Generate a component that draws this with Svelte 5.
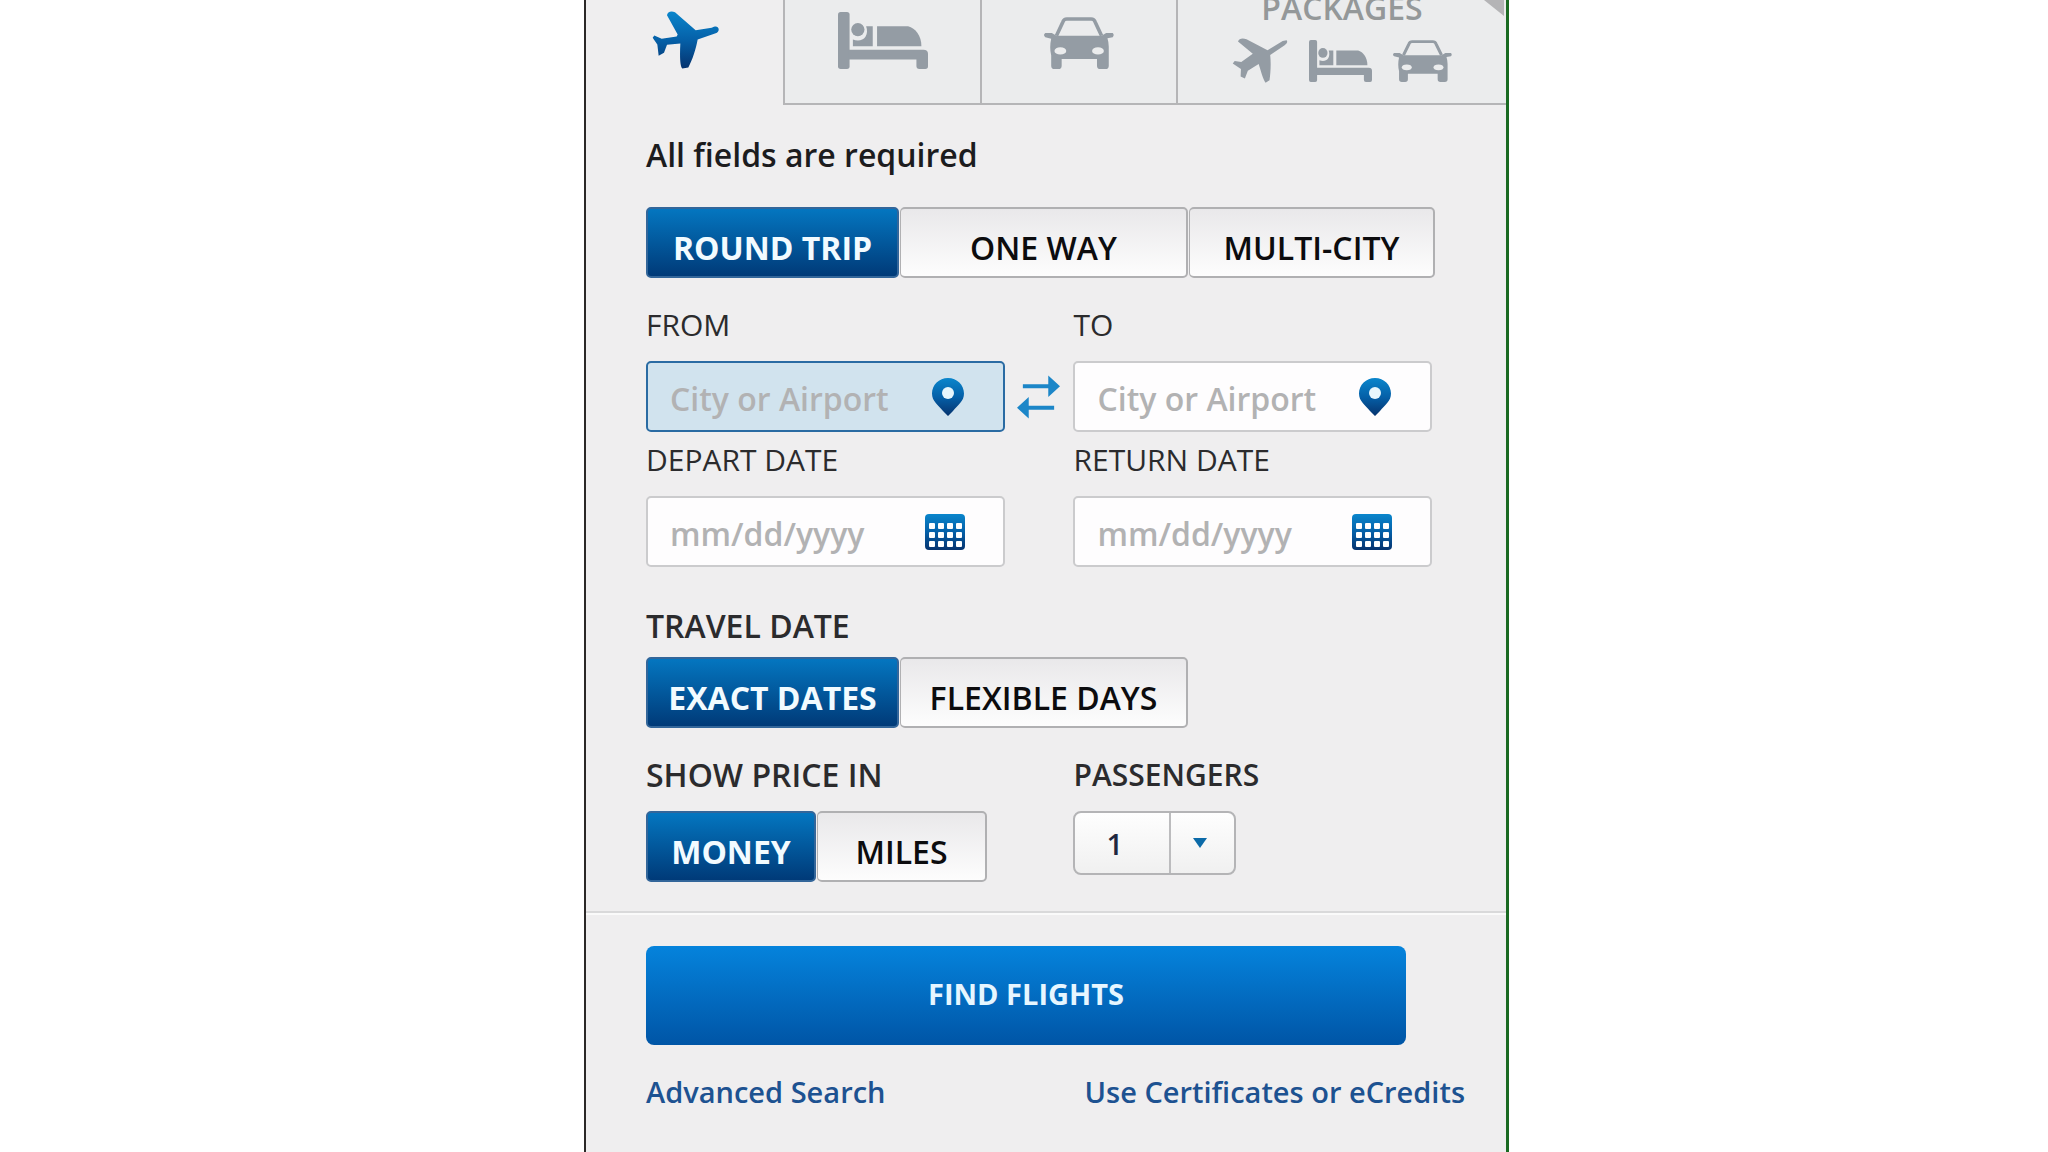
<script>
  // Flight search form of the booking widget: product tabs on top, search fields below.
  const tripTypes = ["ROUND TRIP", "ONE WAY", "MULTI-CITY"];
  const dateModes = ["EXACT DATES", "FLEXIBLE DAYS"];
  const currencies = ["MONEY", "MILES"];

  let product = $state("flight");
  let trip = $state("ROUND TRIP");
  let dateMode = $state("EXACT DATES");
  let currency = $state("MONEY");
  let from = $state("");
  let to = $state("");
  let depart = $state("");
  let ret = $state("");
  let passengers = $state("1");

  function swap() {
    [from, to] = [to, from];
  }
</script>

{#snippet bed(cls)}
  <svg class={cls} viewBox="803 35 272 172" preserveAspectRatio="none" fill="currentColor" aria-hidden="true">
    <rect x="803" y="35" width="35" height="172" rx="8" />
    <circle cx="863" cy="88" r="20" />
    <path d="M888 78h20v60h-60v-20c14 6 30 4 38-8 6-10 6-20 2-32z" />
    <path d="M921 78h94c22 6 40 28 40 60H921z" />
    <path d="M836 149h225q14 0 14 12v38q0 8-8 8h-18q-9 0-9-9v-20H836z" />
  </svg>
{/snippet}

{#snippet car(cls)}
  <svg class={cls} viewBox="22 48 214 155" preserveAspectRatio="none" fill="currentColor" aria-hidden="true">
    <path d="M60 104l20-42q3-8 12-8h74q9 0 12 8l20 42" fill="none" stroke="currentColor" stroke-width="11" />
    <path d="M26 96h20l14 8h138l14-8h20q6 6 0 12l-16 3q4 12 4 26v56q0 10-10 10h-16q-10 0-10-10v-20H76v20q0 10-10 10H54q-10 0-10-10v-30q-6-24 0-50l-18-5q-8-6 0-12z" />
    <ellipse class="lamp" cx="72" cy="149" rx="18" ry="11" />
    <ellipse class="lamp" cx="187" cy="149" rx="18" ry="11" />
  </svg>
{/snippet}

{#snippet pin()}
  <svg class="pin" viewBox="0 0 34 40" aria-hidden="true">
    <path d="M17 1C8 1 1 8 1 16.500c0 8 6 11 11 17.500l5 5 5-5c5-6.500 11-9.500 11-17.500C33 8 26 1 17 1z" fill="url(#blue)" />
    <circle cx="17" cy="16" r="6" fill="#e8f6fc" />
  </svg>
{/snippet}

{#snippet calendar()}
  <svg class="cal" viewBox="0 0 40 36" aria-hidden="true">
    <rect width="40" height="36" rx="4" fill="url(#blue)" />
    {#each [9, 18, 27] as y}
      {#each [4, 13, 22, 31] as x}
        <rect {x} {y} width="6" height="6" rx="1" fill="#fff" />
      {/each}
    {/each}
  </svg>
{/snippet}

{#snippet segment(options, current, pick, label)}
  <div class="seg" role="group" aria-label={label}>
    {#each options as o}
      <button type="button" class:on={o === current} aria-pressed={o === current} onclick={() => pick(o)}>{o}</button>
    {/each}
  </div>
{/snippet}

<svg class="defs" width="0" height="0" aria-hidden="true">
  <defs>
    <linearGradient id="blue" x1="0" y1="0" x2="0" y2="1">
      <stop offset="0" stop-color="#0a86cc" />
      <stop offset="0.5" stop-color="#0560a8" />
      <stop offset="1" stop-color="#06336e" />
    </linearGradient>
  </defs>
</svg>

<div class="page">
  <main class="panel">
    <nav class="tabs">
      <button type="button" class="tab" class:active={product === "flight"} aria-label="Flights" onclick={() => (product = "flight")}>
        <svg class="plane" viewBox="243 40 201 173" aria-hidden="true">
          <path d="M440 88c6 5 3 16-6 18l-54 19c-5 28-16 62-28 84l-18 3c-7-7-8-36-6-75l-40 4-9 24-16 9-4-34-14-20 5-7 22 10 45-7 3-6-32-58c1-10 12-14 24-9l62 54 48-7c8-4 14-5 18-2z" fill="url(#blue)" />
        </svg>
      </button>
      <button type="button" class="tab" class:active={product === "hotel"} aria-label="Hotels" onclick={() => (product = "hotel")}>
        {@render bed("bed")}
      </button>
      <button type="button" class="tab" class:active={product === "car"} aria-label="Cars" onclick={() => (product = "car")}>
        {@render car("car")}
      </button>
      <button type="button" class="tab wide" class:active={product === "packages"} onclick={() => (product = "packages")}>
        <span class="tab-name">PACKAGES</span>
        <span class="trio">
          <svg class="plane-sm" viewBox="576 113 170 137" fill="currentColor" aria-hidden="true">
            <path d="M742 120c4 5 1 10-6 15l-44 30c3 26 1 55-2 77l-12 7c-8-10-15-38-21-57l-33 21-9 23-13-6 1-23-25-16 6-8 20 3 35-25-45-37c3-10 14-12 26-7l64 33 46-28z" />
          </svg>
          {@render bed("bed-sm")}
          {@render car("car-sm")}
        </span>
        <svg class="corner" viewBox="0 0 20 16" aria-hidden="true"><path d="M0 0h20v16z" fill="#b4b4b6" /></svg>
      </button>
    </nav>

    <form onsubmit={(e) => e.preventDefault()}>
      <p class="note">All fields are required</p>

      {@render segment(tripTypes, trip, (v) => (trip = v), "Trip type")}

      <div class="cols">
        <div class="field">
          <label for="from">FROM</label>
          <div class="box focus"><input id="from" type="text" placeholder="City or Airport" bind:value={from} />{@render pin()}</div>
        </div>
        <button type="button" class="swap" aria-label="Swap airports" onclick={swap}>
          <svg viewBox="0 0 44 44" aria-hidden="true">
            <path d="M6 11h28M10 33h28" stroke="#1c86c8" stroke-width="4" />
            <path d="M32 0l12 11-12 11zM12 22L0 33l12 11z" fill="#1c86c8" />
          </svg>
        </button>
        <div class="field">
          <label for="to">TO</label>
          <div class="box"><input id="to" type="text" placeholder="City or Airport" bind:value={to} />{@render pin()}</div>
        </div>
      </div>

      <div class="cols dates">
        <div class="field">
          <label for="depart">DEPART DATE</label>
          <div class="box"><input id="depart" type="text" placeholder="mm/dd/yyyy" bind:value={depart} />{@render calendar()}</div>
        </div>
        <div class="field last">
          <label for="return">RETURN DATE</label>
          <div class="box"><input id="return" type="text" placeholder="mm/dd/yyyy" bind:value={ret} />{@render calendar()}</div>
        </div>
      </div>

      <div class="travel">
        <h2>TRAVEL DATE</h2>
        {@render segment(dateModes, dateMode, (v) => (dateMode = v), "Travel date")}
      </div>

      <div class="cols price">
        <div>
          <h2>SHOW PRICE IN</h2>
          {@render segment(currencies, currency, (v) => (currency = v), "Show price in")}
        </div>
        <div class="field last">
          <label class="strong" for="passengers">PASSENGERS</label>
          <div class="picker">
            <select id="passengers" bind:value={passengers}>
              {#each ["1", "2", "3", "4", "5", "6"] as n}<option>{n}</option>{/each}
            </select>
            <svg class="caret" viewBox="0 0 14 10" aria-hidden="true"><path d="M0 0h14L7 10z" fill="#0b6aa8" /></svg>
          </div>
        </div>
      </div>

      <footer>
        <button type="submit" class="find">FIND FLIGHTS</button>
        <div class="links">
          <a href="#advanced">Advanced Search</a>
          <a href="#certificates">Use Certificates or eCredits</a>
        </div>
      </footer>
    </form>
  </main>
</div>

<style>
  :global(body) { margin: 0; background: #fff; }
  .defs { position: absolute; }
  button, input, select { font-family: inherit; margin: 0; }
  button { cursor: pointer; }

  .page { display: grid; grid-template-columns: 584fr minmax(0, 925px) 539fr; min-height: 100vh; font-family: "Open Sans", "Noto Sans", sans-serif; color: #2b2b2d; }
  .panel { grid-column: 2; box-sizing: border-box; border-left: 2px solid #2b2827; border-right: 3px solid #1a6a22; background: #efeeef; }

  /* tabs */
  .tabs { display: grid; grid-template-columns: 197fr 197fr 196fr 330fr; grid-template-rows: 105px; }
  .tab { position: relative; box-sizing: border-box; display: flex; flex-direction: column; align-items: center; justify-content: flex-end; border: 0; border-left: 2px solid #b5b5b7; border-bottom: 2px solid #b5b5b7; padding: 0 0 34px; background: #ebeced; color: #949ca4; height: 105px; }
  .tab.active { border-color: transparent; background: none; }
  .tab.wide { padding-bottom: 20px; }
  .tab-name { font-size: 32px; line-height: 28px; font-weight: 600; color: #949899; }
  .trio { display: flex; align-items: center; gap: 21px; margin-top: 16px; }
  .corner { position: absolute; top: 0; right: 2px; width: 20px; height: 16px; }
  .plane { width: 67px; height: 58px; }
  .bed { width: 90px; height: 57px; }
  .car { width: 70px; height: 52px; }
  .plane-sm { width: 56px; height: 45px; }
  .bed-sm { width: 63px; height: 42px; }
  .car-sm { width: 59px; height: 42px; }
  .tab svg { flex: none; }
  .lamp { fill: #ebeced; }

  form { padding: 30px 74px 0 60px; }
  .note { margin: 0 0 32px; font-size: 32px; line-height: 40px; font-weight: 600; color: #1c1c1e; }
  label { display: block; font-size: 30px; line-height: 40px; }
  label.strong { font-weight: 600; }
  h2 { margin: 0; font-size: 32px; line-height: 40px; font-weight: 600; }

  /* segmented buttons */
  .seg { display: flex; gap: 1px; }
  .seg button { box-sizing: border-box; flex: 0 0 auto; width: 253px; height: 71px; padding: 10px 0 0; border: 2px solid #b0b0b2; border-radius: 5px; background: linear-gradient(#e9e8ea, #fdfdfd); font-size: 32px; line-height: 40px; font-weight: 600; color: #0c0c0e; }
  .seg button + button { width: 288px; border-left-width: 1px; }
  .seg button:nth-child(3) { width: 246px; }
  .seg button.on { border-color: #33669a; background: linear-gradient(#0476c0, #003a78); color: #f2fbff; font-weight: 700; }
  .price .seg button { width: 170px; }

  /* paired fields */
  .cols { display: grid; grid-template-columns: minmax(0, 359fr) 69fr minmax(0, 359fr); margin-top: 27px; }
  .cols.dates { margin-top: 8px; }
  .last { grid-column: 3; }
  .box { box-sizing: border-box; display: flex; align-items: center; height: 71px; margin-top: 16px; padding: 0 38px 0 22px; border: 2px solid #cbcbcd; border-radius: 5px; background: #fefdfe; }
  .box.focus { border-color: #2a6ba3; background: #d1e3ee; }
  input { flex: 1; min-width: 0; padding: 4px 0 0; border: 0; outline: 0; background: none; font-size: 32px; line-height: 40px; font-weight: 600; color: #2b2b2d; }
  input::placeholder { color: #b2b2b3; opacity: 1; }
  .pin { width: 34px; height: 40px; }
  .cal { width: 40px; height: 36px; }
  .swap { display: flex; align-items: center; justify-content: center; align-self: end; height: 71px; padding: 0; border: 0; background: none; }
  .swap svg { width: 43px; height: 44px; }

  .travel { margin-top: 39px; }
  .travel .seg { margin-top: 11px; }
  .price .seg { margin-top: 16px; }

  .picker { position: relative; width: 163px; margin-top: 16px; }
  select { appearance: none; box-sizing: border-box; width: 100%; height: 64px; padding: 0 0 0 31px; border: 2px solid #b4b4b6; border-radius: 8px; background: linear-gradient(90deg, transparent 94px, #bcbcbe 94px, #bcbcbe 96px, transparent 96px), linear-gradient(#fefefe, #f0f0f0); font-size: 29px; font-weight: 600; color: #1f2740; }
  .caret { position: absolute; right: 29px; top: 27px; width: 14px; height: 10px; pointer-events: none; }

  footer { margin: 29px -74px 0 -60px; padding: 33px 41px 0 60px; border-top: 2px solid #d9d9da; box-shadow: inset 0 2px #fafafa; }
  .find { display: block; width: calc(100% - 59px); height: 99px; padding: 0 0 4px; border: 0; border-radius: 8px; background: linear-gradient(#0583dc, #0055a6); font-size: 29px; font-weight: 700; color: #e6f6ff; }
  .links { display: flex; justify-content: space-between; margin-top: 27px; }
  a { font-size: 29px; line-height: 40px; font-weight: 600; color: #1d5291; text-decoration: none; white-space: nowrap; }
</style>
